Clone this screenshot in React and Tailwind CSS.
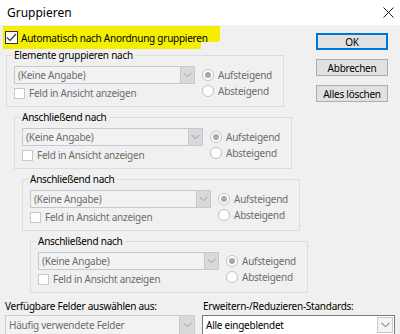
import React from "react";

const F = { fontFamily: '"Noto Sans", "Open Sans", sans-serif' };

function Chevron({ color = "#9a9a9a" }) {
  return (
    <svg width="9" height="6" viewBox="0 0 9 6">
      <path d="M0.5 0.8 L4.5 4.8 L8.5 0.8" fill="none" stroke={color} strokeWidth="1" />
    </svg>
  );
}

function DisabledSelect({ text }) {
  return (
    <div className="w-[181px] h-[18px] flex items-stretch border border-[#bccadb] bg-[#f2f2f2]">
      <div className="flex-1 flex items-center pl-[3px] text-[#6d6d6d] leading-none whitespace-nowrap">{text}</div>
      <div className="w-[14px] flex items-center justify-center bg-[#d9d9d9] border-l border-[#c8c8c8]">
        <Chevron />
      </div>
    </div>
  );
}

function Radio({ checked, label }) {
  return (
    <div className="flex items-center gap-[4px] h-[16px]">
      <div className="w-[12px] h-[12px] rounded-full border border-[#c2c2c2] bg-white flex items-center justify-center">
        {checked && <div className="w-[6px] h-[6px] rounded-full bg-[#a8a8a8]" />}
      </div>
      <span className="text-[#6d6d6d] leading-none whitespace-nowrap">{label}</span>
    </div>
  );
}

function Group({ title, cls }) {
  return (
    <fieldset className={`${cls} w-[278px] border border-[#dcdcdc] pl-[5px] pr-[6px] pb-[7px]`}>
      <legend className="px-[2px] leading-[14px] text-black whitespace-nowrap">{title}</legend>
      <div className="flex gap-[7px] mt-[4px]">
        <div className="flex flex-col gap-[3px] pl-[2px]">
          <DisabledSelect text="(Keine Angabe)" />
          <div className="flex items-center gap-[4px] h-[12px]">
            <div className="w-[11px] h-[11px] border border-[#c8c8c8] bg-white" />
            <span className="text-[#6d6d6d] leading-none whitespace-nowrap">Feld in Ansicht anzeigen</span>
          </div>
        </div>
        <div className="flex flex-col pt-[1px]">
          <Radio checked label="Aufsteigend" />
          <Radio label="Absteigend" />
        </div>
      </div>
    </fieldset>
  );
}

function Btn({ children, primary }) {
  return (
    <div
      className={`w-[72px] h-[17px] flex items-center justify-center text-black leading-none bg-[#e1e1e1] border whitespace-nowrap ${
        primary ? "border-[#0078d7] ring-1 ring-inset ring-[#0078d7]" : "border-[#adadad]"
      }`}
    >
      {children}
    </div>
  );
}

export default function App() {
  return (
    <div className="w-[400px] h-[334px] overflow-hidden bg-[#f0f0f0] text-[10px] tracking-[-0.25px]" style={F}>
      <div className="h-[25px] bg-white flex items-center justify-between pl-[7px] pr-[6px]">
        <span className="text-[12px] tracking-normal text-black">Gruppieren</span>
        <svg width="11" height="11" viewBox="0 0 11 11">
          <path d="M0.5 0.5 L10.5 10.5 M10.5 0.5 L0.5 10.5" stroke="#222" strokeWidth="1" />
        </svg>
      </div>
      <div className="flex px-[5px]">
        <div className="w-[310px] flex flex-col">
          <div className="relative mt-[1px] -ml-[2px] w-[198px] h-[23px] bg-[#f4ef00] flex items-center pl-[2px] gap-[3px]">
            <div className="absolute left-[197px] top-0 w-[20px] h-[16px] bg-[#f4ef00] rounded-br-[3px]" />
            <div className="w-[13px] h-[13px] border border-[#333] bg-white flex items-center justify-center">
              <svg width="11" height="9" viewBox="0 0 11 9">
                <path d="M1 4.5 L4 7.5 L10 1" fill="none" stroke="#333" strokeWidth="1.2" />
              </svg>
            </div>
            <span className="relative text-black leading-none whitespace-nowrap">Automatisch nach Anordnung gruppieren</span>
          </div>
          <Group title="Elemente gruppieren nach" cls="ml-[1px] -mt-[1px]" />
          <Group title="Anschließend nach" cls="ml-[9px] mt-[3px]" />
          <Group title="Anschließend nach" cls="ml-[17px] mt-[3px]" />
          <Group title="Anschließend nach" cls="ml-[25px] mt-[3px]" />
        </div>
        <div className="ml-auto mr-[7px] mt-[8px] flex flex-col gap-[9px]">
          <Btn primary>OK</Btn>
          <Btn>Abbrechen</Btn>
          <Btn>Alles löschen</Btn>
        </div>
      </div>
      <div className="flex px-[5px] mt-[6px]">
        <div className="flex flex-col w-[199px]">
          <span className="text-black leading-[14px] whitespace-nowrap">Verfügbare Felder auswählen aus:</span>
          <div className="mt-[2px] w-[190px] h-[20px] flex items-stretch border border-[#cccccc] bg-[#f2f2f2]">
            <div className="flex-1 flex items-center pl-[3px] text-[#6d6d6d] leading-none whitespace-nowrap">Häufig verwendete Felder</div>
            <div className="w-[15px] flex items-center justify-center bg-[#d9d9d9] border-l border-[#c8c8c8]">
              <Chevron />
            </div>
          </div>
        </div>
        <div className="flex flex-col">
          <span className="text-black leading-[14px] pl-[1px] whitespace-nowrap">Erweitern-/Reduzieren-Standards:</span>
          <div className="mt-[2px] w-[193px] h-[20px] flex items-stretch border border-[#7a7a7a] bg-white">
            <div className="flex-1 flex items-center pl-[3px] text-black leading-none whitespace-nowrap">Alle eingeblendet</div>
            <div className="w-[16px] my-[1px] mr-[1px] flex items-center justify-center bg-[#f3f3f3] border border-[#c8c8c8]">
              <Chevron color="#606060" />
            </div>
          </div>
        </div>
      </div>
    </div>
  );
}
